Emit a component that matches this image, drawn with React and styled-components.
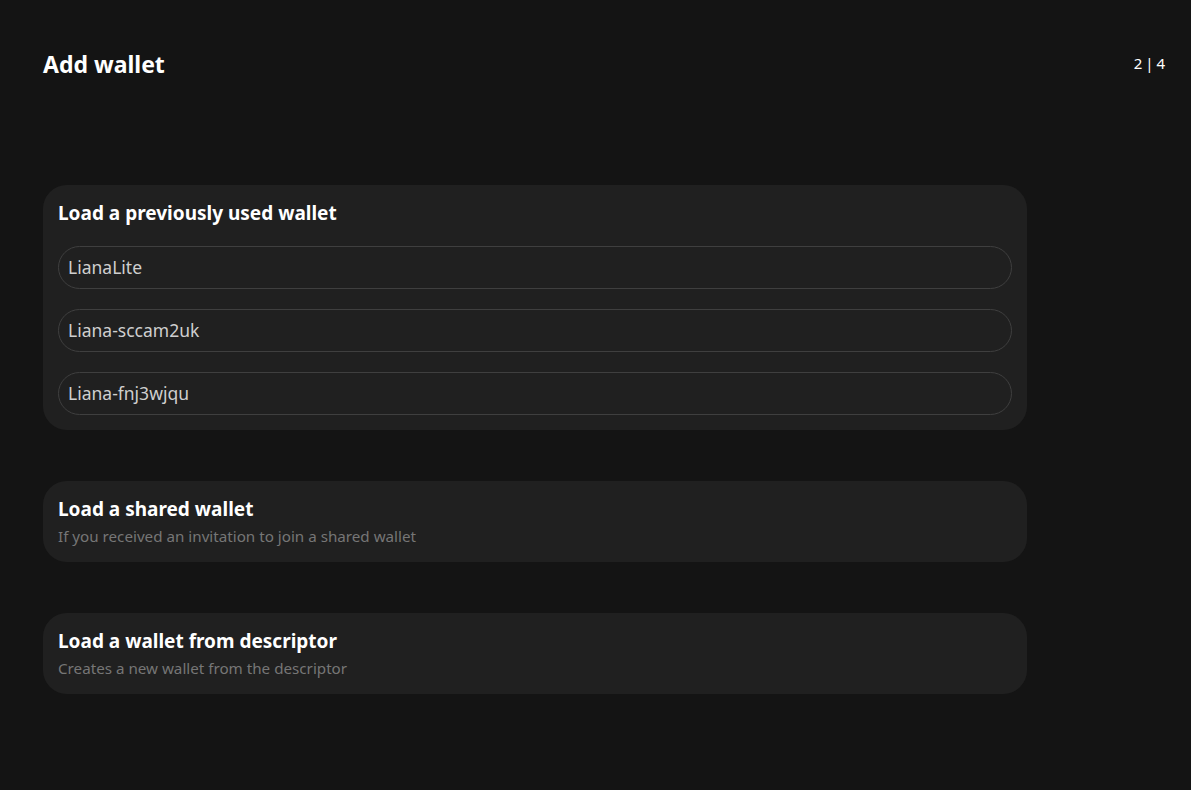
import React from "react";
import styled, { createGlobalStyle } from "styled-components";

const GlobalStyle = createGlobalStyle`
  html, body {
    margin: 0;
    padding: 0;
    background: #141414;
  }
  body {
    font-family: "Noto Sans", "Open Sans", sans-serif;
    color: #ffffff;
  }
`;

const wallets = ["LianaLite", "Liana-sccam2uk", "Liana-fnj3wjqu"];

const App = () => {
  return (
    <>
      <GlobalStyle />
      <Page>
        <Header>
          <Title>Add wallet</Title>
          <Steps>2 | 4</Steps>
        </Header>
        <Content>
          <Card>
            <CardTitle>Load a previously used wallet</CardTitle>
            <WalletList>
              {wallets.map((name) => (
                <WalletButton key={name}>{name}</WalletButton>
              ))}
            </WalletList>
          </Card>
          <Card>
            <CardTitle>Load a shared wallet</CardTitle>
            <CardText>If you received an invitation to join a shared wallet</CardText>
          </Card>
          <Card>
            <CardTitle>Load a wallet from descriptor</CardTitle>
            <CardText>Creates a new wallet from the descriptor</CardText>
          </Card>
        </Content>
      </Page>
    </>
  );
};
export default App;

const Page = styled.div`
  width: 1191px;
  height: 790px;
  box-sizing: border-box;
  padding: 48px 26px 0 43px;
  background: #141414;
`;

const Header = styled.div`
  display: flex;
  justify-content: space-between;
  align-items: center;
  height: 32px;
`;

const Title = styled.h1`
  margin: 0;
  font-size: 23px;
  font-weight: 700;
  line-height: 32px;
  color: #ffffff;
`;

const Steps = styled.div`
  font-size: 15px;
  line-height: 32px;
  margin-top: -2px;
  word-spacing: -1px;
  color: #ffffff;
`;

const Content = styled.div`
  display: flex;
  flex-direction: column;
  gap: 51px;
  width: 984px;
  margin-top: 105px;
`;

const Card = styled.div`
  display: flex;
  flex-direction: column;
  padding: 15px;
  border-radius: 24px;
  background: #202020;
`;

const CardTitle = styled.div`
  font-size: 19px;
  font-weight: 700;
  line-height: 26px;
  color: #ffffff;
`;

const CardText = styled.div`
  margin-top: 3px;
  font-size: 15.2px;
  line-height: 22px;
  color: #767676;
`;

const WalletList = styled.div`
  display: flex;
  flex-direction: column;
  gap: 20px;
  margin-top: 20px;
`;

const WalletButton = styled.button`
  height: 43px;
  box-sizing: border-box;
  padding: 0 9px 2px;
  border: 1px solid #3f3f3f;
  border-radius: 22px;
  background: #202020;
  color: #cfcfcf;
  font-family: "Noto Sans", "Open Sans", sans-serif;
  font-size: 17.5px;
  text-align: left;
  cursor: pointer;
`;
